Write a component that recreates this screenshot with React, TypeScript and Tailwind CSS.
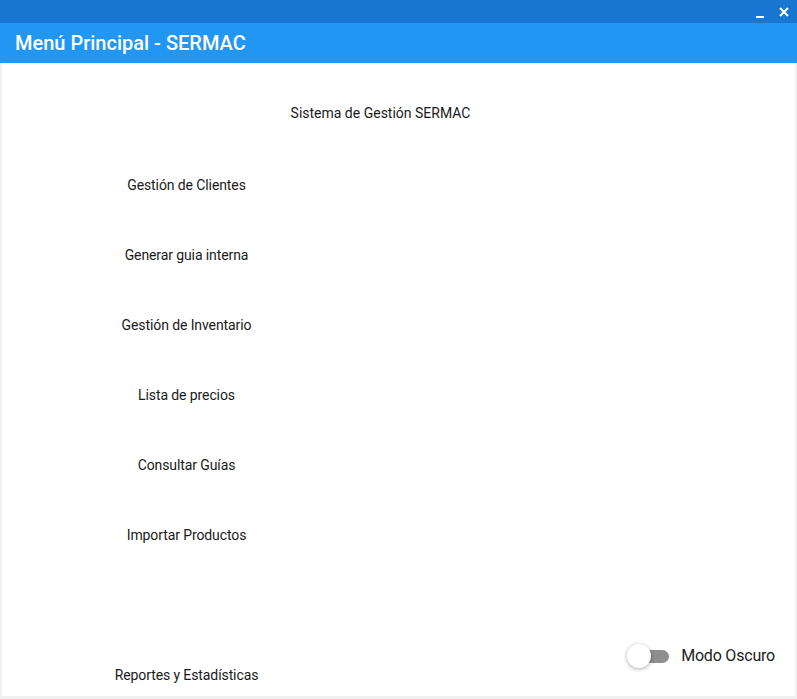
import React from "react";

const menuItems = [
	"Gestión de Clientes",
	"Generar guia interna",
	"Gestión de Inventario",
	"Lista de precios",
	"Consultar Guías",
	"Importar Productos",
	"",
	"Reportes y Estadísticas",
];

const App: React.FC = () => {
	return (
		<div className="h-[699px] w-[797px] overflow-hidden bg-[#f0f0f0] font-['Roboto',sans-serif] flex flex-col">
			{/* title bar */}
			<div className="h-[23px] bg-[#1976d2] flex justify-end items-center gap-[14px] pr-[8px] shrink-0">
				<svg width="9" height="9" viewBox="0 0 9 9" className="mt-[3px]">
					<rect x="0" y="7" width="8" height="2" fill="white" />
				</svg>
				<svg width="10" height="10" viewBox="0 0 10 10">
					<path d="M1 1 L9 9 M9 1 L1 9" stroke="white" strokeWidth="2" />
				</svg>
			</div>
			{/* header */}
			<div className="h-[40px] bg-[#2196f3] flex items-center px-[15px] shrink-0">
				<h1 className="text-white text-[20px] font-medium">Menú Principal - SERMAC</h1>
			</div>
			{/* body */}
			<div className="flex-1 min-h-0 mx-[2px] mb-[3px] bg-white flex flex-col overflow-hidden">
				<div className="h-[87px] shrink-0 flex justify-center pr-[36px] pt-[40px]">
					<p className="text-[14px] leading-[21px] text-[#1a1a1a]">Sistema de Gestión SERMAC</p>
				</div>
				<div className="flex shrink-0">
					<div className="w-[368px] shrink-0 flex flex-col">
						{menuItems.map((item, i) => (
							<div key={i} className="h-[70px] shrink-0 flex items-center justify-center pl-[1px]">
								{item && <button className="text-[14px] tracking-[-0.1px] text-[#1a1a1a]">{item}</button>}
							</div>
						))}
					</div>
					<div className="flex-1 flex flex-col justify-end items-end pr-[20px] pb-[42px]">
						<label className="flex items-center gap-[12px]">
							<span className="relative w-[42px] h-[24px] flex items-center">
								<span className="ml-[5px] w-[37px] h-[13px] rounded-full bg-[#8f8f8f]" />
								<span className="absolute left-0 top-0 w-[24px] h-[24px] rounded-full bg-white shadow-[0_1px_4px_rgba(0,0,0,0.35)]" />
							</span>
							<span className="text-[16px] tracking-[-0.2px] text-[#212121]">Modo Oscuro</span>
						</label>
					</div>
				</div>
			</div>
		</div>
	);
};

export default App;
